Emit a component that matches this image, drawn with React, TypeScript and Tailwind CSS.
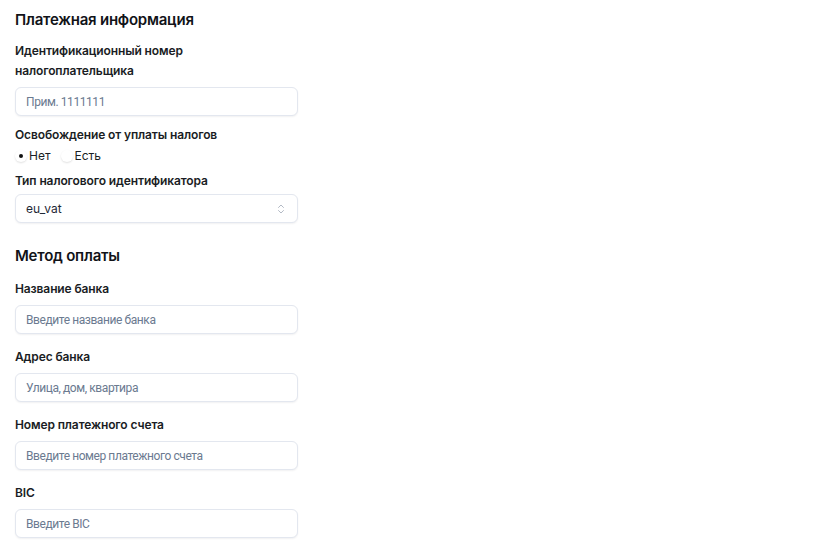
import { ChevronsUpDown } from "lucide-react";

const boxCls =
  "block w-full h-[29px] rounded-md border border-[#e3e7ef] bg-white px-[10px] text-xs text-[#1f2937] shadow-[0_1px_2px_rgba(15,23,42,0.06)] outline-none";

function Field({ label, placeholder, className = "" }: { label: string; placeholder: string; className?: string }) {
  return (
    <div className={className}>
      <label className="block text-xs font-semibold leading-5 tracking-[-0.01em] text-[#1a1d24]">{label}</label>
      <input
        className={`mt-[6px] font-['Roboto',sans-serif] tracking-[-0.035em] placeholder:text-[#6b7a90] ${boxCls}`}
        placeholder={placeholder}
      />
    </div>
  );
}

function Radio({ label, checked }: { label: string; checked?: boolean }) {
  return (
    <label className="flex items-center gap-0.5">
      <span className="flex h-3 w-3 items-center justify-center rounded-full bg-white shadow-[0_1px_2px_rgba(0,0,0,0.12)]">
        {checked && <span className="h-1 w-1 rounded-full bg-[#111]" />}
      </span>
      <span>{label}</span>
    </label>
  );
}

export default function App() {
  return (
    <div className="min-h-screen bg-white px-[15px] pt-2 font-['Inter',sans-serif] text-[#1a1d24]">
      <div className="w-[283px]">
        <h2 className="text-[15px] font-semibold leading-6 tracking-[-0.015em] text-[#111318]">Платежная информация</h2>

        <Field className="mt-[9px]" label="Идентификационный номер налогоплательщика" placeholder="Прим. 1111111" />

        <div className="mt-[9px] text-xs font-semibold leading-5 tracking-[-0.01em]">Освобождение от уплаты налогов</div>
        <div className="mt-px flex h-5 items-center gap-2.5 text-xs">
          <Radio label="Нет" checked />
          <Radio label="Есть" />
        </div>

        <div className="mt-[5px]">
          <label className="block text-xs font-semibold leading-5 tracking-[-0.01em]">Тип налогового идентификатора</label>
          <div className={`mt-[3px] flex items-center justify-between ${boxCls}`}>
            <span>eu_vat</span>
            <ChevronsUpDown className="h-3 w-3 text-[#9aa3b2]" strokeWidth={1.5} />
          </div>
        </div>

        <h2 className="mt-[21px] text-[15px] font-semibold leading-6 tracking-[-0.015em] text-[#111318]">Метод оплаты</h2>

        <Field className="mt-[11px]" label="Название банка" placeholder="Введите название банка" />
        <Field className="mt-[13px]" label="Адрес банка" placeholder="Улица, дом, квартира" />
        <Field className="mt-[13px]" label="Номер платежного счета" placeholder="Введите номер платежного счета" />
        <Field className="mt-[13px]" label="BIC" placeholder="Введите BIC" />
      </div>
    </div>
  );
}
